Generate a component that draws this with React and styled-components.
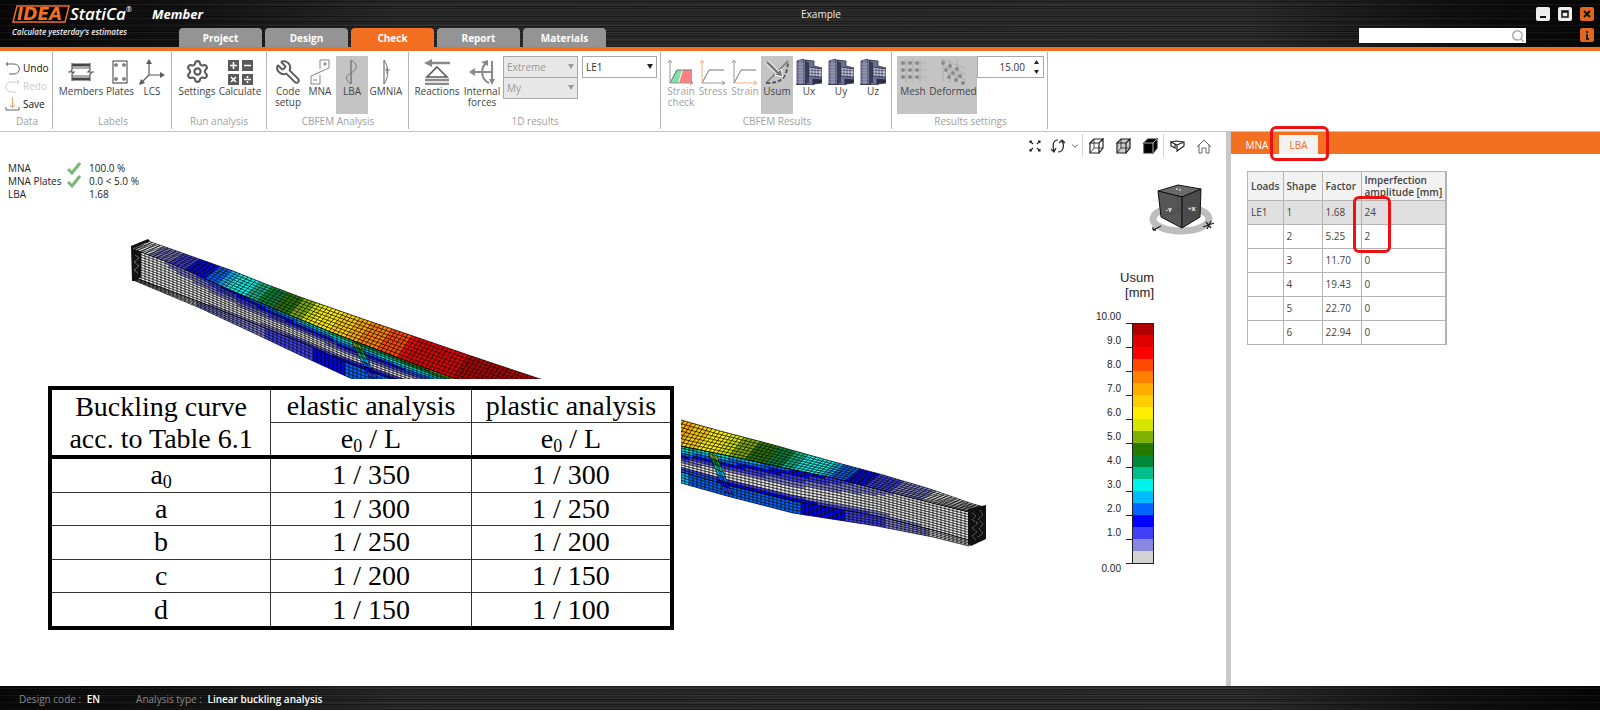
import React from "react";
import styled, { createGlobalStyle, css } from "styled-components";
import { ChevronDown, Search, Settings, Wrench } from "lucide-react";

const PALETTE = [
  "#d2d2d2", "#8888e2", "#4040f4", "#0000ff", "#0066ff",
  "#00bcff", "#00f4ea", "#00bf8c", "#008836", "#267a00",
  "#80b000", "#d6e600", "#ffee00", "#ffce00", "#ffae00",
  "#ff8000", "#ff4800", "#ff0000", "#e00000", "#b00000",
];

/* ---------- beam mesh ---------- */

const FLANGE_TOP = [
  [148, 241], [185, 254], [233, 271], [263, 283], [300, 297], [357, 317], [410, 335], [480, 359], [537, 378],
  [681, 420], [720, 431], [770, 444], [827, 460], [883, 475], [930, 489], [973, 504], [984, 507],
];
const FLANGE_FRONT = [
  [133, 249], [170, 263], [195, 274], [230, 290], [287, 314], [333, 333], [370, 347], [447, 376],
  [681, 446], [710, 452], [753, 461], [780, 467], [833, 478], [877, 489], [920, 500], [969, 512],
];
const WEB_BOTTOM = [
  [133, 277], [200, 302], [260, 326], [300, 342], [350, 364], [400, 382],
  [681, 472], [727, 485], [793, 501], [877, 516], [933, 530], [969, 540],
];
const BEAM_BOTTOM = [
  [133, 280], [200, 308], [260, 336], [300, 355], [350, 378],
  [681, 483], [727, 496], [793, 513], [877, 526], [933, 537], [969, 546],
];
const TOP_LEVEL = [
  [133, 0], [148, 1], [166, 2], [186, 3], [203, 4], [215, 5], [223, 6], [246, 7], [255, 8], [270, 9],
  [286, 10], [298, 11], [309, 12], [328, 13], [343, 14], [356, 15], [378, 16], [396, 17], [405, 18],
  [453, 19], [580, 19], [650, 15], [678, 14], [693, 13], [715, 12], [726, 11], [741, 10], [761, 9],
  [778, 8], [790, 7], [818, 6], [828, 5], [843, 4], [863, 3], [886, 2], [915, 1], [969, 0],
];
const BOTTOM_LEVEL = [
  [133, 0], [198, 1], [268, 2], [315, 3], [345, 4], [500, 6], [681, 5], [795, 4], [840, 3], [880, 2], [925, 1], [969, 0],
];

const at = (points, x) => {
  for (let i = 1; i < points.length; i++) {
    const [x0, y0] = points[i - 1];
    const [x1, y1] = points[i];
    if (x <= x1) return y0 + ((y1 - y0) * (x - x0)) / (x1 - x0);
  }
  return points[points.length - 1][1];
};

const STATIONS = [];
for (let x = 133; x <= 969; x += 4) STATIONS.push(x);

const flangePoint = (x, t) => {
  const px = x + 15 * t;
  const low = at(FLANGE_FRONT, x);
  return [px, low + (at(FLANGE_TOP, x + 15) - low) * t];
};
const webPoint = (x, t) => [x, at(FLANGE_FRONT, x) + (at(WEB_BOTTOM, x) - at(FLANGE_FRONT, x)) * t];
const bottomPoint = (x, t) => [x, at(WEB_BOTTOM, x) + (at(BEAM_BOTTOM, x) - at(WEB_BOTTOM, x)) * t];

const flangeLevel = (x) => at(TOP_LEVEL, x);
const webLevel = (x, t) => {
  const upper = t < 0.7 ? at(TOP_LEVEL, x) * 0.58 * Math.pow(1 - t / 0.7, 1.1) : 0;
  const lower = t > 0.72 ? (at(BOTTOM_LEVEL, x) * (t - 0.72)) / 0.28 : 0;
  return Math.max(upper, lower);
};

const PARTS = [
  { rows: 7, point: flangePoint, level: flangeLevel },
  { rows: 11, point: webPoint, level: webLevel },
  { rows: 4, point: bottomPoint, level: (x) => at(BOTTOM_LEVEL, x) },
];

const toPath = (points) => points.map(([x, y], i) => `${i ? "L" : "M"}${x.toFixed(1)} ${y.toFixed(1)}`).join("");

const buildMesh = () => {
  const fills = [];
  let lines = "";
  PARTS.forEach(({ rows, point, level }) => {
    for (let r = 0; r < rows; r++) {
      const t0 = r / rows;
      const t1 = (r + 1) / rows;
      let start = 0;
      const idx = (i) => Math.floor(level(STATIONS[i], (t0 + t1) / 2) + 0.05);
      for (let i = 1; i < STATIONS.length; i++) {
        const last = i === STATIONS.length - 1;
        if (idx(i) !== idx(start) || last) {
          const run = STATIONS.slice(start, i + 1);
          const up = run.map((x) => point(x, t0));
          const down = run.map((x) => point(x, t1)).reverse();
          fills.push({ d: toPath([...up, ...down]) + "Z", color: idx(start) ? PALETTE[idx(start)] : "#f0f0f0" });
          start = i;
        }
      }
      lines += toPath(STATIONS.map((x) => point(x, t0)));
    }
    lines += toPath(STATIONS.map((x) => point(x, 1)));
    STATIONS.forEach((x) => {
      lines += toPath([point(x, 0), point(x, 1)]);
    });
  });
  return { fills, lines };
};

const MESH = buildMesh();

const Stiffener = ({ x, y, dx, dy }) => (
  <g>
    {["#80b000", "#008836", "#00bf8c", "#00bcff", "#0066ff", "#0000ff", "#4040f4"].map((color, i) => {
      const a = i / 7;
      const b = (i + 1) / 7;
      return (
        <path
          key={color}
          fill={color}
          stroke="#000"
          strokeWidth="0.6"
          d={`M${x + dx * a} ${y + dy * a}l8 3L${x + dx * b + 8} ${y + dy * b + 3}l-8 -3Z`}
        />
      );
    })}
    <path d={`M${x + 3} ${y + 1}l${dx} ${dy}M${x + 5} ${y + 2}l${dx} ${dy}`} stroke="#000" strokeWidth="0.6" />
  </g>
);

const Beam = () => (
  <BeamSvg viewBox="0 132 1226 554" width="1226" height="554" aria-label="Deformed beam">
    {MESH.fills.map((f, i) => (
      <path key={i} d={f.d} fill={f.color} />
    ))}
    <path d={MESH.lines} fill="none" stroke="#000" strokeWidth="0.75" />
    <Stiffener x={352} y={342} dx={17} dy={34} />
    <Stiffener x={709} y={453} dx={15} dy={38} />
    <path d="M131 246L148 239L150 241L135 250L141 252V277L135 281H132Z" fill="#111" />
    <path d="M135 255l4 3l-5 4l5 4l-5 4l4 3M133 249l13 -6" fill="none" stroke="#aaa" strokeWidth="0.6" />
    <path d="M968 509L986 505V539L971 546L968 544Z" fill="#111" />
    <path
      d="M972 513l4 3l-4 4l6 3l-6 5l5 4l-5 4l4 4M980 510l3 5l-5 4l5 5l-4 5l4 4l-5 4"
      fill="none"
      stroke="#aaa"
      strokeWidth="0.6"
      strokeDasharray="2 1"
    />
  </BeamSvg>
);

/* ---------- ribbon icons ---------- */

const Icon = ({ size = 26, children, ...rest }) => (
  <svg width={size} height={size} viewBox="0 0 26 26" fill="none" stroke="#5a5a5a" strokeWidth="1.2" {...rest}>
    {children}
  </svg>
);

const MembersIcon = () => (
  <Icon>
    <path d="M4 6h18M4 20h18" strokeWidth="3" stroke="#444" />
    <path d="M4 9h18M4 17h18" />
    <path d="M4 4v7l-2 2h4l-2 2v7M22 4v7l-2 2h4l-2 2v7M0 13h3M23 13h3" />
  </Icon>
);
const PlatesIcon = () => (
  <Icon>
    <rect x="6" y="2" width="14" height="22" />
    <circle cx="9" cy="6" r="1.2" />
    <circle cx="17" cy="6" r="1.2" />
    <circle cx="9" cy="20" r="1.2" />
    <circle cx="17" cy="20" r="1.2" />
  </Icon>
);
const LcsIcon = () => (
  <Icon>
    <path d="M10 3v13h14M10 16l-8 8" />
    <path d="M10 0l3 5h-6zM26 16l-5-3v6zM0 26l2-6l4 4z" fill="#5a5a5a" stroke="none" />
  </Icon>
);
const CalculateIcon = () => (
  <Icon>
    <path d="M1 1h11v11H1zM15 1h11v11H15zM1 15h11v11H1zM15 15h11v11H15z" fill="#5a5a5a" stroke="none" />
    <path d="M3 6.500h7M6.500 3v7M17 6.500h7M4 18l5 5M9 18l-5 5M17 20.500h7M20.500 17v2M20.500 22v2" stroke="#fff" strokeWidth="1.600" />
  </Icon>
);
const MnaIcon = () => (
  <Icon strokeWidth="0.9" stroke="#777">
    <path d="M13 1h9v8L4 17v8h9V16M13 1v9" />
    <path d="M16 5h4M18 3v4M6 21h4" />
  </Icon>
);
const LbaIcon = () => (
  <Icon strokeWidth="1" stroke="#777">
    <path d="M12 1v24" stroke="#555" />
    <path d="M12 1c7 4 7 9 0 13c-6 3-6 7 0 11" />
  </Icon>
);
const GmniaIcon = () => (
  <Icon strokeWidth="1" stroke="#777">
    <path d="M11 1v24" stroke="#555" />
    <path d="M11 1c5 7 5 17 0 24M14 8v7M12 11h5" />
  </Icon>
);
const ReactionsIcon = () => (
  <Icon strokeWidth="1.600">
    <path d="M13 8L23 18H3z" />
    <path d="M6 4h20M1 21h24M1 25h24" stroke="#8a8a8a" strokeWidth="2.600" />
    <path d="M0 4l8-4v8z" fill="#8a8a8a" stroke="none" />
  </Icon>
);
const ForcesIcon = () => (
  <Icon stroke="#8a8a8a" strokeWidth="2">
    <path d="M3 13h20M23 2v20M19 3c-8 4-8 17 1 21" />
    <path d="M0 13l6-4v8zM23 26l-3-6h6zM12 3l7-2v6z" fill="#8a8a8a" stroke="none" />
  </Icon>
);
const ChartIcon = ({ xAxis = "#999", yAxis = "#999", filled }) => (
  <Icon strokeWidth="1">
    {filled && <path d="M2 24L8 11H14L10 24z" fill="#7de0a8" stroke="none" />}
    {filled && <path d="M11 24L15 11H24V24z" fill="#ff8080" stroke="none" />}
    <path d="M2 24L9 11H24" stroke="#777" />
    <path d="M2 2v22M0 4l2-3l2 3" stroke={yAxis} />
    <path d="M2 24h23M22 22l3 2l-3 2" stroke={xAxis} />
  </Icon>
);
const UsumIcon = () => (
  <Icon strokeWidth="1.500">
    <path d="M2 24L24 2" stroke="#777" />
    <path d="M2 24c14 0 21-3 22-22" strokeDasharray="4 2" strokeWidth="2" />
    <path d="M3 3L14 14" stroke="#fff" strokeWidth="4.500" />
    <path d="M19 18l-8-2l6-6z" fill="#777" stroke="#fff" strokeWidth="1" />
    <path d="M3 3L14 14" stroke="#777" strokeWidth="2.500" />
  </Icon>
);
const JointIcon = () => (
  <Icon stroke="#2b2d45" strokeWidth="0.8">
    <path d="M1 2l7-2v26H1zM9 1l9 1v5l8 2v12l-8 1v4H9z" fill="#6b7095" />
    <path d="M1 5h7M1 8h7M1 11h7M1 14h7M1 17h7M1 20h7M1 23h7M4 1v25M6 1v25" stroke="#a9aec8" strokeWidth="0.6" />
    <path d="M13 8l13 2v8l-13-1z" fill="#c5c8dc" />
    <path d="M13 11l13 1M13 14l13 1M16 8v9M19 9v9M22 9v9" strokeWidth="0.6" />
    <path d="M10 1v25M0 26h10M12 3v21" strokeWidth="1.500" />
    <path d="M17 20l9 1v3l-9 1z" fill="#2b2d45" />
  </Icon>
);
const gridDots = [3, 10, 17];
const MeshIcon = () => (
  <Icon stroke="#aaa" strokeWidth="0.8">
    {gridDots.map((v) => (
      <path key={v} d={`M0 ${v + 1}h26M${v + 3} 0v24`} />
    ))}
    {gridDots.map((y) => gridDots.map((x) => <circle key={`${x}-${y}`} cx={x} cy={y + 1} r="2" fill="#8a8a8a" stroke="none" />))}
  </Icon>
);
const DeformedIcon = () => (
  <Icon stroke="#aaa" strokeWidth="0.8">
    {[0, 1, 2].map((r) => (
      <path key={r} d={`M${1 + r * 3} ${r * 7}l24 9M${3 + r * 7} 0v24`} />
    ))}
    {[0, 1, 2].map((r) =>
      [0, 1, 2].map((c) => (
        <circle key={`${r}-${c}`} cx={3 + c * 7 + r * 3} cy={4 + r * 7 + c * 3} r="2" fill="#8a8a8a" stroke="none" />
      ))
    )}
  </Icon>
);

const UndoIcon = ({ flip, color = "#666" }) => (
  <svg width="15" height="14" viewBox="0 0 15 14" fill="none" stroke={color}>
    <path d={flip ? "M14 3H6C-1 3-1 13 6 13H11M12 1l2 2l-2 2" : "M1 3H9C16 3 16 13 9 13H4M3 1L1 3l2 2"} />
  </svg>
);
const SaveIcon = () => (
  <svg width="15" height="14" viewBox="0 0 15 14" fill="none" stroke="#666">
    <path d="M1 10v3h13v-3" />
    <path d="M7.500 0v10M5 8l2.500 3L10 8" stroke="#f4a070" />
  </svg>
);

/* ---------- viewport icons ---------- */

const Small = ({ children, ...rest }) => (
  <svg width="16" height="16" viewBox="0 0 16 16" fill="none" stroke="#222" {...rest}>
    {children}
  </svg>
);
const ExpandIcon = () => (
  <Small>
    <path d="M3 5V3h2M3 3l3 3M11 3h2v2M13 3l-3 3M3 11v2h2M3 13l3-3M13 11v2h-2M13 13l-3-3" strokeWidth="1.100" />
  </Small>
);
const RotateIcon = () => (
  <Small>
    <path d="M8 2C3 2 2 8 4 13M1 11l3 3l2-4M8 14c5 0 7-6 4-11M9 5l3-3l3 3" strokeWidth="1.200" />
  </Small>
);
const CubeIcon = ({ fill = "none", inner = true }) => (
  <Small>
    <path d="M2 5l4-4h9l-4 4zM2 5h9v10H2zM11 5l4-4v9l-4 5z" fill={fill} strokeWidth="1.200" />
    {inner ? <path d="M6 1v9h9M6 10l-4 5" strokeWidth="0.8" /> : <path d="M2 5h9v10M11 5l4-4" stroke="#fff" strokeWidth="0.6" />}
  </Small>
);
const ClipIcon = () => (
  <Small>
    <path d="M2 4l5-1l8 1v4l-7 5v-6zM2 4v4l4 2V6zM8 7l7-3" strokeWidth="1.200" />
  </Small>
);
const HomeIcon = () => (
  <Small stroke="#666">
    <path d="M1 9l7-7l7 7M3 7v8h3v-5h4v5h3V7" />
  </Small>
);

const ViewCube = () => (
  <CubeSvg width="68" height="52" viewBox="1147 183 68 52">
    <ellipse cx="1181" cy="219" rx="28" ry="12" fill="none" stroke="#bdbdbd" strokeWidth="7" />
    <path d="M1158 191L1178 185L1201 189L1182 197Z" fill="#6a6a6a" stroke="#111" />
    <path d="M1158 191L1182 197V228L1161 217Z" fill="#565656" stroke="#111" />
    <path d="M1182 197L1201 189L1200 217L1182 228Z" fill="#4c4c4c" stroke="#111" />
    <path d="M1161 217l17-6l22 5M1178 211v-14" stroke="#444" strokeWidth="0.6" fill="none" />
    <path d="M1176 189h2M1179 190h2" stroke="#fff" />
    <CubeText x="1166" y="212">-Y</CubeText>
    <CubeText x="1188" y="211">+X</CubeText>
    <path d="M1153 230l8-4M1153 230v-3M1153 230h3M1203 227l11-4M1206 222l5 6M1211 221l-4 8" stroke="#222" strokeWidth="1.300" />
  </CubeSvg>
);

/* ---------- data ---------- */

const TABS = ["Project", "Design", "Check", "Report", "Materials"];

const SHAPES = [
  ["LE1", 1, "1.68", 24],
  ["", 2, "5.25", 2],
  ["", 3, "11.70", 0],
  ["", 4, "19.43", 0],
  ["", 5, "22.70", 0],
  ["", 6, "22.94", 0],
];

const CURVES = [
  [<>a<sub>0</sub></>, "1 / 350", "1 / 300"],
  ["a", "1 / 300", "1 / 250"],
  ["b", "1 / 250", "1 / 200"],
  ["c", "1 / 200", "1 / 150"],
  ["d", "1 / 150", "1 / 100"],
];

const LEGEND_LABELS = ["10.00", "9.0", "8.0", "7.0", "6.0", "5.0", "4.0", "3.0", "2.0", "1.0", "0.00"];

const Check = () => (
  <svg width="14" height="13" viewBox="0 0 14 13" fill="none" stroke="#78b878" strokeWidth="3">
    <path d="M1 7l4 4L13 1" />
  </svg>
);

const Tool = ({ icon, width, active, muted, children }) => (
  <ToolButton type="button" $width={width} $active={active} $muted={muted}>
    <ToolIcon>{icon}</ToolIcon>
    <span>{children}</span>
  </ToolButton>
);

const Dropdown = ({ label, value, disabled }) => (
  <SelectWrap>
    <SelectBox aria-label={label} defaultValue={value} disabled={disabled}>
      <option>{value}</option>
    </SelectBox>
    <SelectArrow width="6" height="5" viewBox="0 0 6 5">
      <path d="M0 0h6L3 5z" fill={disabled ? "#999" : "#222"} />
    </SelectArrow>
  </SelectWrap>
);

const App = () => (
  <Page>
    <GlobalStyle />
    <Header>
      <TitleRow>
        <Brand>
          <svg width="58" height="18" viewBox="0 0 58 18">
            <path d="M5 1H57L53 17H1Z" fill="#000" stroke="#f36f21" strokeWidth="1.500" />
            <LogoText x="5" y="15">IDEA</LogoText>
          </svg>
          <BrandName>
            StatiCa<sup>®</sup>
          </BrandName>
          <Product>Member</Product>
        </Brand>
        <DocTitle>Example</DocTitle>
        <WindowButtons>
          <WindowButton type="button" aria-label="Minimize">
            <svg width="14" height="14"><path d="M4 10h6" stroke="#111" strokeWidth="2" /></svg>
          </WindowButton>
          <WindowButton type="button" aria-label="Maximize">
            <svg width="14" height="14"><path d="M4 4h6v6H4zM4 5h6" stroke="#111" strokeWidth="1.500" fill="none" /></svg>
          </WindowButton>
          <WindowButton type="button" aria-label="Close" $orange>
            <svg width="14" height="14"><path d="M4 4l6 6M10 4l-6 6" stroke="#111" strokeWidth="2" /></svg>
          </WindowButton>
        </WindowButtons>
      </TitleRow>
      <TabRow>
        <Tagline>Calculate yesterday's estimates</Tagline>
        <Tabs>
          {TABS.map((tab) => (
            <Tab key={tab} type="button" $active={tab === "Check"}>
              {tab}
            </Tab>
          ))}
        </Tabs>
        <SearchBox>
          <SearchInput type="text" aria-label="Search" />
          <Search size={14} color="#aaa" strokeWidth={2.5} />
        </SearchBox>
        <WindowButton type="button" aria-label="Info" $orange>
          <svg width="14" height="14"><path d="M7 3v2M7 6v5M6 11h3" stroke="#222" strokeWidth="2" /></svg>
        </WindowButton>
      </TabRow>
    </Header>

    <Ribbon>
      <Group $left={5} $right={3}>
        <DataTools>
          <DataButton type="button"><UndoIcon />Undo</DataButton>
          <DataButton type="button" disabled><UndoIcon flip color="#ccc" />Redo</DataButton>
          <DataButton type="button"><SaveIcon />Save</DataButton>
        </DataTools>
        <GroupName>Data</GroupName>
      </Group>
      <Group $left={5} $right={3}>
        <Tools>
          <Tool icon={<MembersIcon />} width={46}>Members</Tool>
          <Tool icon={<PlatesIcon />} width={32}>Plates</Tool>
          <Tool icon={<LcsIcon />} width={32}>LCS</Tool>
        </Tools>
        <GroupName>Labels</GroupName>
      </Group>
      <Group $left={4} $right={4}>
        <Tools>
          <Tool icon={<Settings size={25} color="#5a5a5a" />} width={42}>Settings</Tool>
          <Tool icon={<CalculateIcon />} width={44}>Calculate</Tool>
        </Tools>
        <GroupName>Run analysis</GroupName>
      </Group>
      <Group $left={5} $right={4}>
        <Tools>
          <Tool icon={<FlippedWrench size={26} color="#5a5a5a" strokeWidth={1.8} />} width={32}>Code setup</Tool>
          <Tool icon={<MnaIcon />} width={32}>MNA</Tool>
          <Tool icon={<LbaIcon />} width={32} active>LBA</Tool>
          <Tool icon={<GmniaIcon />} width={36}>GMNIA</Tool>
        </Tools>
        <GroupName>CBFEM Analysis</GroupName>
      </Group>
      <Group $left={4} $right={3}>
        <Tools>
          <Tool icon={<ReactionsIcon />} width={48}>Reactions</Tool>
          <Tool icon={<ForcesIcon />} width={42}>Internal forces</Tool>
          <SelectStack>
            <Dropdown label="Result set" value="Extreme" disabled />
            <Dropdown label="Component" value="My" disabled />
          </SelectStack>
          <SelectStack $gap={4}>
            <Dropdown label="Load effect" value="LE1" />
          </SelectStack>
        </Tools>
        <GroupName>1D results</GroupName>
      </Group>
      <Group $left={4} $right={2}>
        <Tools>
          <Tool icon={<ChartIcon filled />} width={32} muted>Strain check</Tool>
          <Tool icon={<ChartIcon yAxis="#f8b080" />} width={32} muted>Stress</Tool>
          <Tool icon={<ChartIcon xAxis="#f8b080" />} width={32} muted>Strain</Tool>
          <Tool icon={<UsumIcon />} width={32} active>Usum</Tool>
          <Tool icon={<JointIcon />} width={32}>Ux</Tool>
          <Tool icon={<JointIcon />} width={32}>Uy</Tool>
          <Tool icon={<JointIcon />} width={32}>Uz</Tool>
        </Tools>
        <GroupName>CBFEM Results</GroupName>
      </Group>
      <Group $left={5} $right={3}>
        <Tools>
          <Tool icon={<MeshIcon />} width={32} active>Mesh</Tool>
          <Tool icon={<DeformedIcon />} width={48} active>Deformed</Tool>
          <Spinner>
            <SpinnerInput type="text" aria-label="Deformation scale" defaultValue="15.00" />
            <SpinnerButtons>
              <SpinnerButton type="button" aria-label="Increase">
                <svg width="5" height="4"><path d="M0 4h5L2.500 0z" fill="#222" /></svg>
              </SpinnerButton>
              <SpinnerButton type="button" aria-label="Decrease">
                <svg width="5" height="4"><path d="M0 0h5L2.500 4z" fill="#222" /></svg>
              </SpinnerButton>
            </SpinnerButtons>
          </Spinner>
        </Tools>
        <GroupName>Results settings</GroupName>
      </Group>
    </Ribbon>

    <Main>
      <Viewport>
        <Beam />
        <ViewBar>
          <ViewButton type="button" aria-label="Zoom all"><ExpandIcon /></ViewButton>
          <ViewButton type="button" aria-label="Rotate" $width={20}><RotateIcon /></ViewButton>
          <ViewButton type="button" aria-label="Rotation options" $width={14}><ChevronDown size={10} color="#333" /></ViewButton>
          <ViewButton type="button" aria-label="Wireframe" $split><CubeIcon /></ViewButton>
          <ViewButton type="button" aria-label="Transparent"><CubeIcon fill="#ccc" /></ViewButton>
          <ViewButton type="button" aria-label="Solid"><CubeIcon fill="#000" inner={false} /></ViewButton>
          <ViewButton type="button" aria-label="Clipping" $split><ClipIcon /></ViewButton>
          <ViewButton type="button" aria-label="Home"><HomeIcon /></ViewButton>
        </ViewBar>
        <Summary>
          <span>MNA</span><Check /><span>100.0 %</span>
          <span>MNA Plates</span><Check /><span>0.0 &lt; 5.0 %</span>
          <span>LBA</span><span /><span>1.68</span>
        </Summary>
        <ViewCube />
        <Legend>
          <LegendTitle>Usum<br />[mm]</LegendTitle>
          <LegendBody>
            <LegendLabels>
              {LEGEND_LABELS.map((label) => (
                <span key={label}>{label}</span>
              ))}
            </LegendLabels>
            <svg width="28" height="243" viewBox="0 0 28 243">
              {PALETTE.map((color, i) => (
                <rect key={color} x="7" y={229 - i * 12} width="20" height="12" fill={color} />
              ))}
              <rect x="6.500" y="1.500" width="21" height="240" fill="none" stroke="#222" />
              {LEGEND_LABELS.map((label, i) => (
                <path key={label} d={`M0 ${i * 24 + 1.5}h7`} stroke="#222" />
              ))}
            </svg>
          </LegendBody>
        </Legend>
        <CurveTable>
          <colgroup>
            <col width="220" />
            <col width="200" />
            <col width="200" />
          </colgroup>
          <thead>
            <tr>
              <th rowSpan={2}>Buckling curve<br />acc. to Table 6.1</th>
              <th>elastic analysis</th>
              <th>plastic analysis</th>
            </tr>
            <tr>
              <th>e<sub>0</sub> / L</th>
              <th>e<sub>0</sub> / L</th>
            </tr>
          </thead>
          <tbody>
            {CURVES.map(([name, elastic, plastic], i) => (
              <tr key={i}>
                <td>{name}</td>
                <td>{elastic}</td>
                <td>{plastic}</td>
              </tr>
            ))}
          </tbody>
        </CurveTable>
      </Viewport>

      <SidePanel>
        <PanelTabs>
          <PanelTab type="button">MNA</PanelTab>
          <PanelTab type="button" $active>LBA<TabMark /></PanelTab>
        </PanelTabs>
        <ShapeFrame>
          <ShapeTable>
            <colgroup>
              <col width="35" />
              <col width="39" />
              <col width="39" />
              <col width="84" />
            </colgroup>
            <thead>
              <tr>
                <th>Loads</th>
                <th>Shape</th>
                <th>Factor</th>
                <th>Imperfection<br />amplitude&nbsp;[mm]</th>
              </tr>
            </thead>
            <tbody>
              {SHAPES.map((row) => (
                <ShapeRow key={row[1]} $selected={row[1] === 1}>
                  {row.map((cell, i) => (
                    <td key={i}>{cell}</td>
                  ))}
                </ShapeRow>
              ))}
            </tbody>
          </ShapeTable>
          <AmplitudeMark />
        </ShapeFrame>
      </SidePanel>
    </Main>

    <Footer>
      <FooterItem>Design code : <b>EN</b></FooterItem>
      <FooterItem>Analysis type : <b>Linear buckling analysis</b></FooterItem>
    </Footer>
  </Page>
);

/* ---------- styles ---------- */

const GlobalStyle = createGlobalStyle`
  * {
    box-sizing: border-box;
  }
  body {
    margin: 0;
    background: #fff;
    font-family: "Open Sans", "Noto Sans", sans-serif;
    font-size: 10px;
    color: #333;
  }
  button, input, select {
    font: inherit;
    color: inherit;
    margin: 0;
    padding: 0;
    border: 0;
    border-radius: 0;
    background: none;
  }
`;

const brushed = css`
  background:
    repeating-linear-gradient(0deg, rgba(0, 0, 0, 0.4) 0 1px, transparent 1px 3px, rgba(0, 0, 0, 0.25) 3px 4px, transparent 4px 5px),
    repeating-linear-gradient(0deg, rgba(255, 255, 255, 0.05) 0 1px, transparent 1px 7px),
    linear-gradient(90deg, #080808 0%, #141414 12%, #2a2a2a 25%, #2c2c2c 78%, #121212 90%, #060606 100%);
`;

const Page = styled.div`
  display: flex;
  flex-direction: column;
  min-height: 100vh;
`;

const Header = styled.header`
  ${brushed}
  border-bottom: 4px solid #f36f21;
`;

const TitleRow = styled.div`
  display: flex;
  align-items: center;
  height: 28px;
  padding: 0 6px 0 12px;
`;

const Brand = styled.div`
  display: flex;
  align-items: center;
  color: #fff;
  font-style: italic;
  font-weight: 600;
`;

const LogoText = styled.text`
  font-family: "DejaVu Sans", sans-serif;
  font-size: 17px;
  font-weight: 700;
  font-style: italic;
  fill: #f36f21;
`;

const BrandName = styled.span`
  width: 82px;
  font-size: 17px;
  line-height: 20px;

  sup {
    font-size: 7px;
    line-height: 0;
    vertical-align: 8px;
  }
`;

const Product = styled.span`
  width: 56px;
  font-size: 13px;
  font-weight: 700;
`;

const DocTitle = styled.div`
  flex: 1;
  text-align: center;
  color: #eee;
  margin-right: 102px;
`;

const WindowButtons = styled.div`
  display: flex;
  gap: 8px;
`;

const WindowButton = styled.button`
  display: flex;
  width: 14px;
  height: 14px;
  border-radius: 2px;
  background: ${({ $orange }) => ($orange ? "#e2661d" : "#eee")};
`;

const TabRow = styled.div`
  display: flex;
  height: 19px;
  padding: 0 6px 0 12px;
`;

const Tagline = styled.div`
  width: 167px;
  color: #eee;
  font-size: 8px;
  font-weight: 600;
  font-style: italic;
  line-height: 8px;
`;

const Tabs = styled.nav`
  display: flex;
  flex: 1;
  gap: 3px;
`;

const Tab = styled.button`
  width: 83px;
  border-radius: 4px 4px 0 0;
  background: ${({ $active }) => ($active ? "#f36f21" : "#949494")};
  color: #fff;
  font-weight: 700;
`;

const SearchBox = styled.div`
  display: flex;
  align-items: center;
  width: 167px;
  height: 15px;
  margin-right: 54px;
  padding-right: 1px;
  background: #fff;
`;

const SearchInput = styled.input`
  flex: 1;
  min-width: 0;
  height: 15px;
`;

const Ribbon = styled.div`
  display: flex;
  padding: 1px 0 2px;
  border-bottom: 1px solid #c4c4c4;
  background: #fff;
`;

const Group = styled.section`
  display: flex;
  flex-direction: column;
  padding: 4px ${({ $right }) => $right}px 0 ${({ $left }) => $left}px;
  border-right: 1px solid #b4b4b4;
`;

const GroupName = styled.div`
  color: #a0a0a0;
  line-height: 15px;
  text-align: center;
`;

const Tools = styled.div`
  display: flex;
  align-items: flex-start;
  height: 58px;
`;

const DataTools = styled.div`
  display: flex;
  flex-direction: column;
  width: 44px;
  height: 58px;
  padding-top: 3px;
`;

const DataButton = styled.button`
  display: flex;
  align-items: center;
  gap: 3px;
  height: 18px;
  color: ${({ disabled }) => (disabled ? "#c8c8c8" : "#111")};
`;

const ToolButton = styled.button`
  display: flex;
  flex-direction: column;
  align-items: center;
  width: ${({ $width }) => $width}px;
  height: 58px;
  padding-top: 3px;
  background: ${({ $active }) => ($active ? "#c4c4c4" : "none")};
  color: ${({ $muted }) => ($muted ? "#a0a0a0" : "#444")};
  line-height: 11px;
`;

const ToolIcon = styled.span`
  display: flex;
  height: 27px;
`;

const FlippedWrench = styled(Wrench)`
  transform: scaleX(-1);
`;

const SelectStack = styled.div`
  display: flex;
  flex-direction: column;
  width: 75px;
  margin-left: ${({ $gap }) => $gap || 0}px;
`;

const SelectWrap = styled.div`
  position: relative;

  & + & {
    margin-top: -1px;
  }
`;

const SelectBox = styled.select`
  display: block;
  width: 100%;
  height: 22px;
  padding: 0 3px;
  border: 1px solid #a8a8a8;
  background: #fff;
  color: #333;
  appearance: none;

  &:disabled {
    background: #e8e8e8;
    color: #999;
    opacity: 1;
  }
`;

const SelectArrow = styled.svg`
  position: absolute;
  top: 8px;
  right: 4px;
  pointer-events: none;
`;

const Spinner = styled.div`
  display: flex;
  width: 67px;
  height: 22px;
  border: 1px solid #a8a8a8;
`;

const SpinnerInput = styled.input`
  width: 47px;
  text-align: right;
`;

const SpinnerButtons = styled.div`
  display: flex;
  flex-direction: column;
  flex: 1;
  padding-left: 4px;
`;

const SpinnerButton = styled.button`
  display: flex;
  flex: 1;
  align-items: center;
  justify-content: center;
`;

const Main = styled.main`
  display: flex;
  flex: 1;
`;

const Viewport = styled.section`
  position: relative;
  flex: 1;
  min-height: 554px;
  overflow: hidden;
  background: #fff;
`;

const BeamSvg = styled.svg`
  position: absolute;
  top: 0;
  left: 0;
`;

const ViewBar = styled.div`
  display: flex;
  justify-content: flex-end;
  position: relative;
  padding: 2px 9px 0 0;
`;

const ViewButton = styled.button`
  display: flex;
  align-items: center;
  justify-content: center;
  width: ${({ $width }) => $width || 27}px;
  height: 23px;
  border-left: ${({ $split }) => ($split ? "1px solid #d4d4d4" : "0")};
`;

const Summary = styled.div`
  display: grid;
  grid-template-columns: 59px 22px auto;
  justify-content: start;
  position: relative;
  padding: 5px 0 0 8px;
  line-height: 13px;
  color: #222;
`;

const CubeSvg = styled.svg`
  position: absolute;
  top: 51px;
  right: 11px;
`;

const CubeText = styled.text`
  font-size: 6px;
  font-weight: 700;
  fill: #fff;
`;

const Legend = styled.div`
  position: absolute;
  top: 138px;
  right: 72px;
  font-family: "Liberation Sans", sans-serif;
  color: #222;
`;

const LegendTitle = styled.div`
  font-size: 13px;
  line-height: 15px;
  text-align: right;
`;

const LegendBody = styled.div`
  display: flex;
  align-items: flex-start;
  gap: 5px;
  margin-top: 22px;
`;

const LegendLabels = styled.div`
  display: flex;
  flex-direction: column;
  margin-top: -17px;
  line-height: 24px;
  text-align: right;

  span:last-child {
    padding-top: 12px;
  }
`;

const CurveTable = styled.table`
  position: absolute;
  top: 254px;
  left: 48px;
  width: 626px;
  height: 244px;
  border-collapse: collapse;
  border: 4px solid #000;
  background: #fff;
  box-shadow: 0 0 0 7px #fff;
  font-family: "Liberation Serif", serif;
  font-size: 28px;
  line-height: 32px;
  color: #000;

  th, td {
    height: 33px;
    padding: 0;
    border: 1px solid #333;
    font-weight: 400;
    text-align: center;
  }

  tbody tr:first-child td {
    border-top: 4px solid #000;
  }

  sub {
    font-size: 18px;
    line-height: 0;
    vertical-align: -4px;
  }
`;

const SidePanel = styled.aside`
  width: 374px;
  border-left: 5px solid #c8c8c8;
`;

const PanelTabs = styled.div`
  display: flex;
  align-items: flex-end;
  height: 22px;
  padding-left: 4px;
  background: #f36f21;
`;

const PanelTab = styled.button`
  position: relative;
  width: ${({ $active }) => ($active ? 39 : 44)}px;
  height: 19px;
  background: ${({ $active }) => ($active ? "#f2f2f2" : "none")};
  color: ${({ $active }) => ($active ? "#f36f21" : "#fff")};
`;

const Mark = styled.span`
  position: absolute;
  border: 3px solid #ee1111;
  border-radius: 6px;
  pointer-events: none;
`;

const TabMark = styled(Mark)`
  top: -9px;
  left: -9px;
  width: 59px;
  height: 35px;
`;

const AmplitudeMark = styled(Mark)`
  top: 24px;
  left: 105px;
  width: 38px;
  height: 57px;
`;

const ShapeFrame = styled.div`
  position: relative;
  width: 200px;
  margin: 17px 0 0 16px;
  padding-right: 1px;
  border: 1px solid #b4b4b4;
`;

const ShapeTable = styled.table`
  width: 100%;
  border-collapse: collapse;
  table-layout: fixed;
  color: #444;
  line-height: 12px;

  th, td {
    height: 24px;
    padding: 0 0 0 3px;
    border-right: 1px solid #b4b4b4;
    border-bottom: 1px solid #b4b4b4;
    text-align: left;
  }

  th {
    height: 28px;
    background: #f2f2f2;
    font-weight: 600;
  }

  tbody tr:last-child td {
    border-bottom: 0;
  }
`;

const ShapeRow = styled.tr`
  background: ${({ $selected }) => ($selected ? "#e0e0e0" : "#fff")};
`;

const Footer = styled.footer`
  ${brushed}
  display: flex;
  align-items: center;
  gap: 36px;
  height: 24px;
  padding: 2px 19px 0;
  color: #8a8a8a;
`;

const FooterItem = styled.span`
  b {
    margin-left: 3px;
    color: #fff;
    font-weight: 600;
  }
`;

export default App;
